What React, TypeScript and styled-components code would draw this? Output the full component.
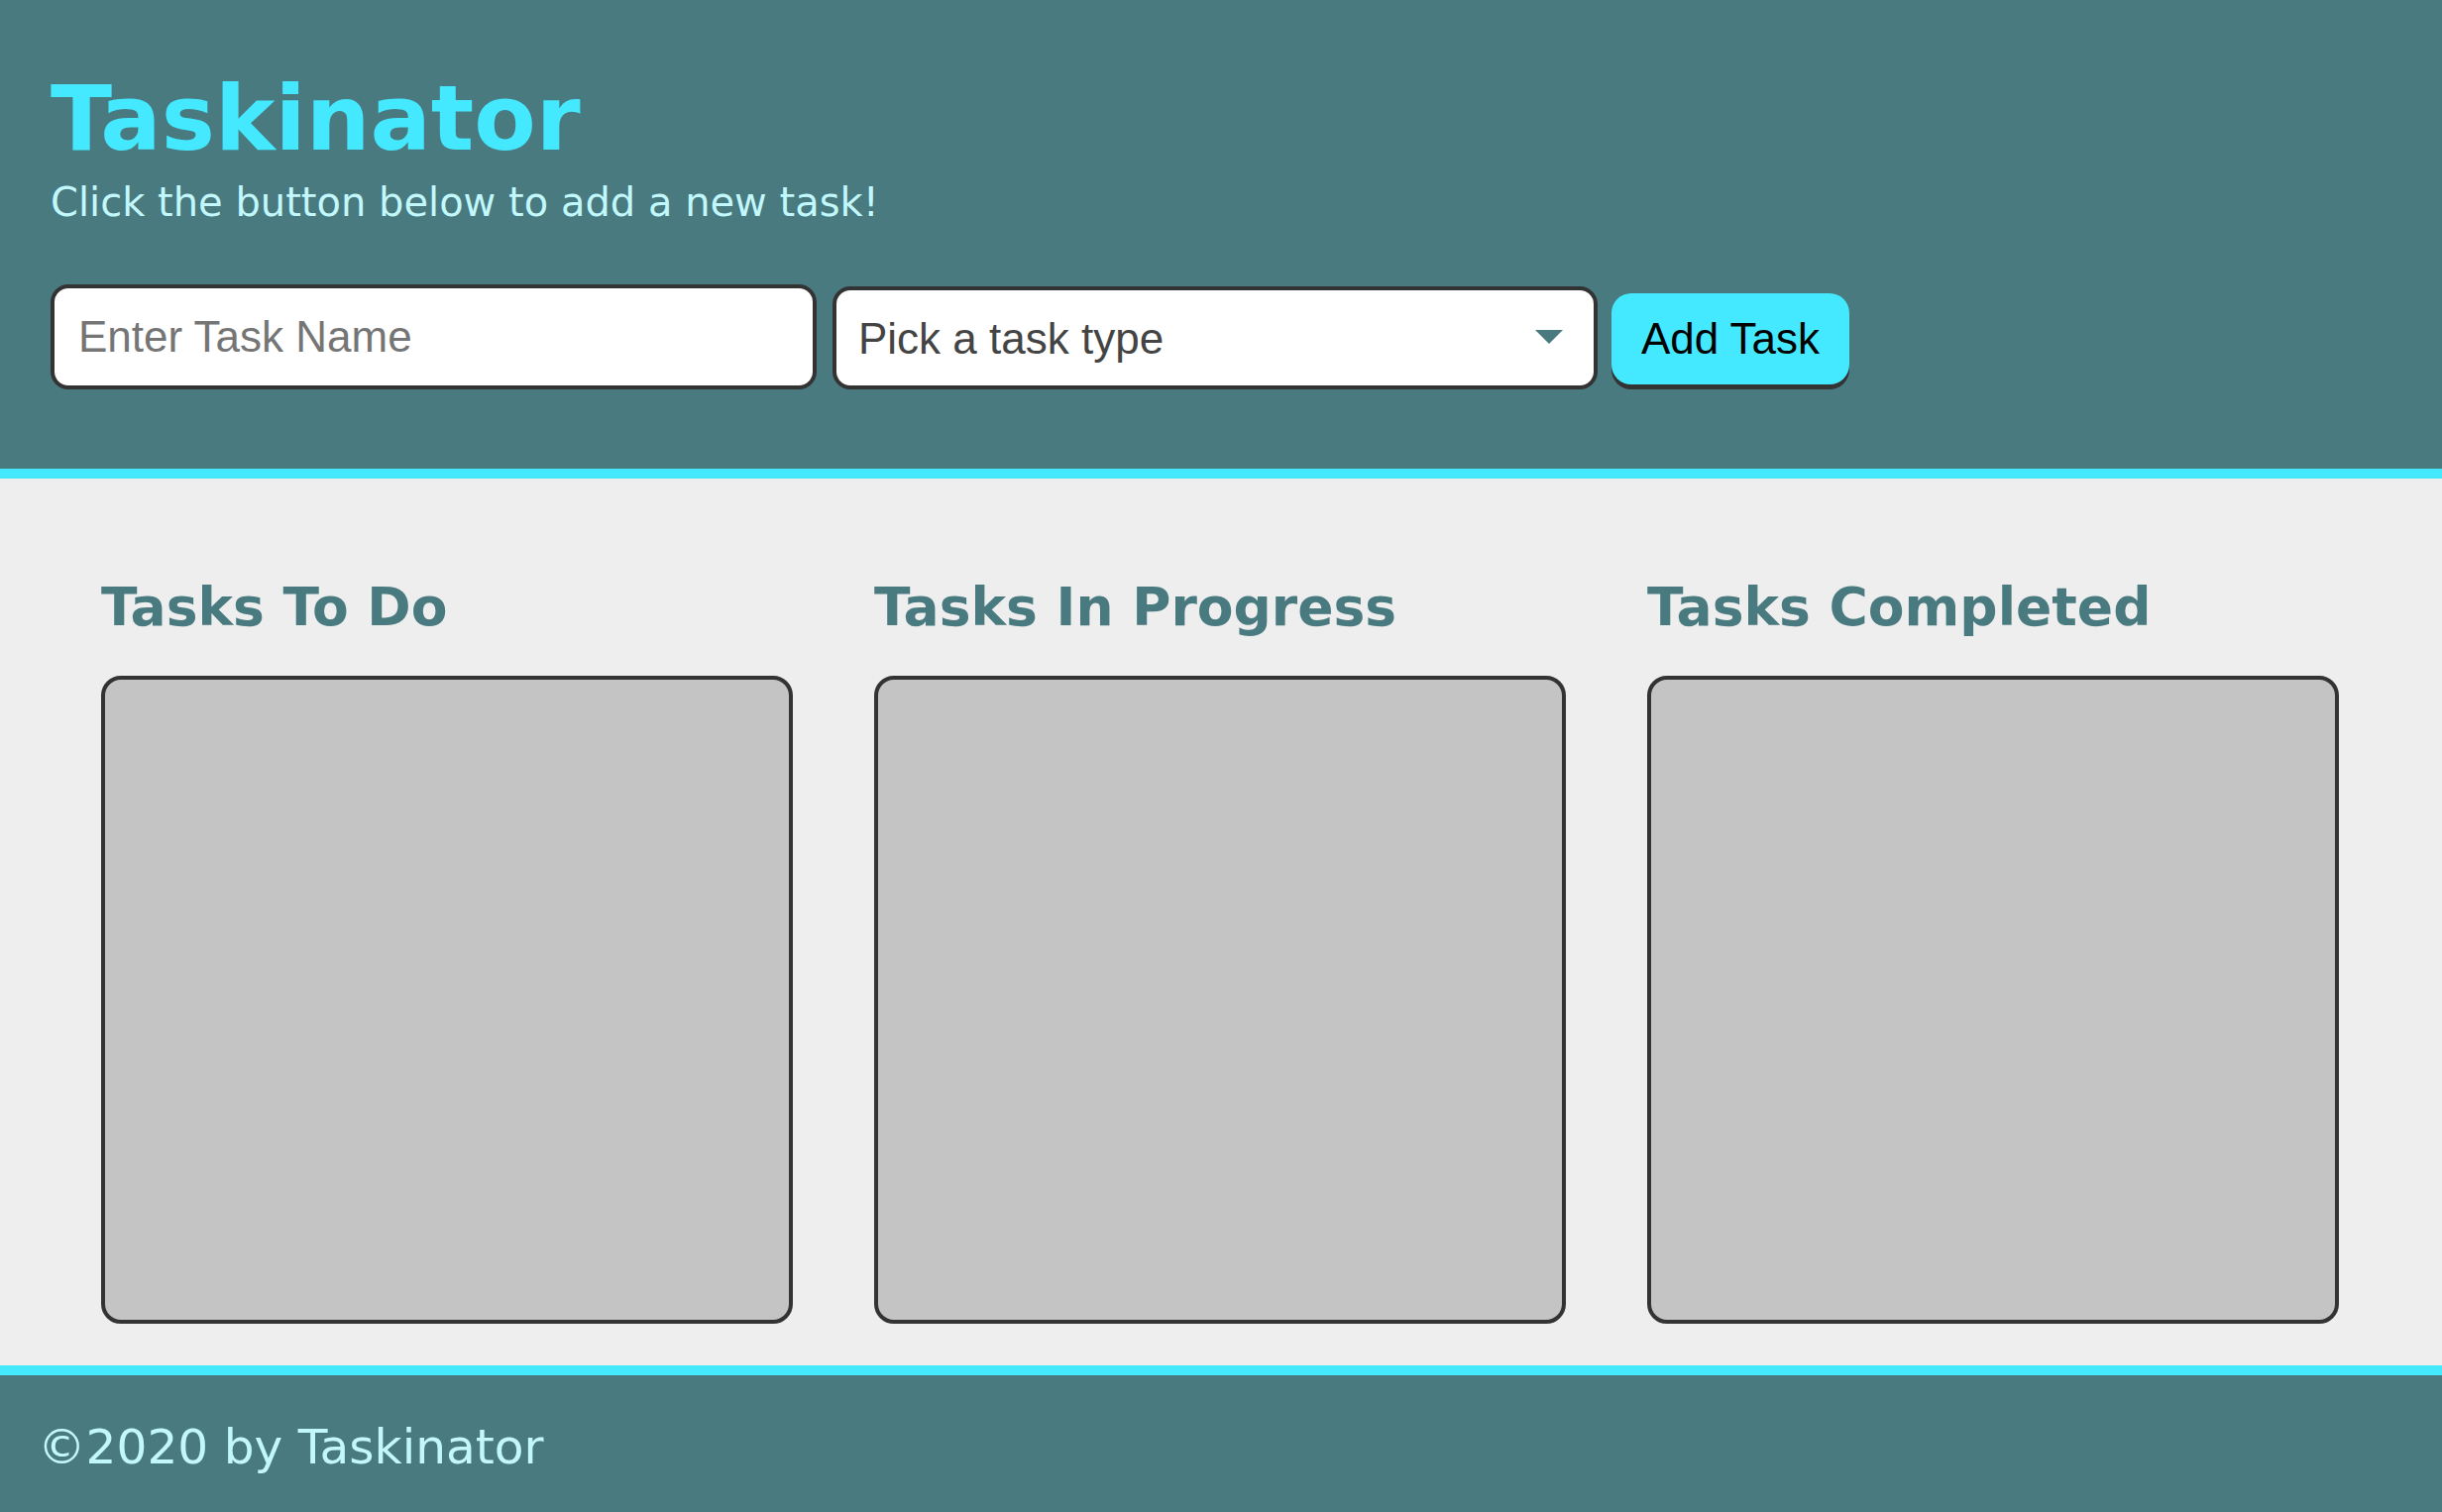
import styled, { createGlobalStyle } from "styled-components";

const GlobalStyle = createGlobalStyle`
  html, body {
    margin: 0;
    padding: 0;
    background: #eeeeee;
  }
  * {
    box-sizing: border-box;
  }
`;

const columns = ["Tasks To Do", "Tasks In Progress", "Tasks Completed"];

function App() {
  return (
    <>
      <GlobalStyle />
      <Page>
        <Header>
          <Title>Taskinator</Title>
          <Subtitle>Click the button below to add a new task!</Subtitle>
          <TaskForm onSubmit={e => e.preventDefault()}>
            <NameInput type="text" placeholder="Enter Task Name" />
            <SelectWrap>
              <TypeSelect defaultValue="">
                <option value="" disabled>Pick a task type</option>
                <option value="Print">Print</option>
                <option value="Web">Web</option>
                <option value="Mobile">Mobile</option>
              </TypeSelect>
              <Arrow width="28" height="14" viewBox="0 0 28 14">
                <path d="M0 0 L28 0 L14 14 Z" fill="#487a80" />
              </Arrow>
            </SelectWrap>
            <AddButton type="submit">Add Task</AddButton>
          </TaskForm>
        </Header>

        <Main>
          {columns.map(name => (
            <Column key={name}>
              <ColumnTitle>{name}</ColumnTitle>
              <TaskList />
            </Column>
          ))}
        </Main>

        <Footer>
          <FooterText>&copy;2020 by Taskinator</FooterText>
        </Footer>
      </Page>
    </>
  );
}

const Page = styled.div`
  display: flex;
  flex-direction: column;
  min-height: 1526px;
  font-family: "DejaVu Sans", Verdana, sans-serif;
`;

const Header = styled.header`
  background: #487a80;
  border-bottom: 10px solid #45e9ff;
  padding: 70px 51px 80px;
`;

const Title = styled.h1`
  margin: 0;
  font-size: 91px;
  line-height: 100px;
  font-weight: bold;
  color: #45e9ff;
`;

const Subtitle = styled.p`
  margin: 10px 0 0;
  font-size: 40px;
  line-height: 48px;
  color: #c2f8fb;
`;

const TaskForm = styled.form`
  display: flex;
  align-items: flex-end;
  margin-top: 59px;
`;

const NameInput = styled.input`
  width: 773px;
  height: 106px;
  padding: 0 24px;
  border: 4px solid #333333;
  border-radius: 18px;
  background: #ffffff;
  font-family: "Liberation Sans", Arial, sans-serif;
  font-size: 44px;
  color: #333333;
  outline: none;
  &::placeholder {
    color: #757575;
  }
`;

const SelectWrap = styled.div`
  position: relative;
  width: 772px;
  height: 104px;
  margin-left: 16px;
`;

const TypeSelect = styled.select`
  appearance: none;
  width: 100%;
  height: 100%;
  padding: 0 80px 0 22px;
  border: 4px solid #333333;
  border-radius: 18px;
  background: #ffffff;
  font-family: "Liberation Sans", Arial, sans-serif;
  font-size: 44px;
  color: #444444;
  outline: none;
`;

const Arrow = styled.svg`
  position: absolute;
  right: 35px;
  top: 44px;
  pointer-events: none;
`;

const AddButton = styled.button`
  width: 240px;
  height: 92px;
  margin-left: 14px;
  margin-bottom: 5px;
  padding: 0;
  border: none;
  border-radius: 20px;
  background: #45e9ff;
  box-shadow: 0 5px 0 #333333;
  font-family: "Liberation Sans", Arial, sans-serif;
  font-size: 44px;
  color: #000000;
  cursor: pointer;
`;

const Main = styled.main`
  flex: 1;
  display: grid;
  grid-template-columns: repeat(3, 1fr);
  gap: 82px;
  padding: 100px 104px 42px 102px;
  background: #eeeeee;
`;

const Column = styled.section`
  display: flex;
  flex-direction: column;
`;

const ColumnTitle = styled.h2`
  margin: 0 0 39px;
  font-size: 53.5px;
  line-height: 60px;
  font-weight: bold;
  color: #487a80;
`;

const TaskList = styled.ul`
  margin: 0;
  padding: 0;
  list-style: none;
  height: 654px;
  background: #c4c4c4;
  border: 4px solid #333333;
  border-radius: 20px;
`;

const Footer = styled.footer`
  background: #487a80;
  border-top: 10px solid #45e9ff;
  padding: 44px 38px 38px;
`;

const FooterText = styled.h3`
  margin: 0;
  font-size: 48.6px;
  line-height: 56px;
  font-weight: normal;
  color: #c2f8fb;
`;

export default App;
